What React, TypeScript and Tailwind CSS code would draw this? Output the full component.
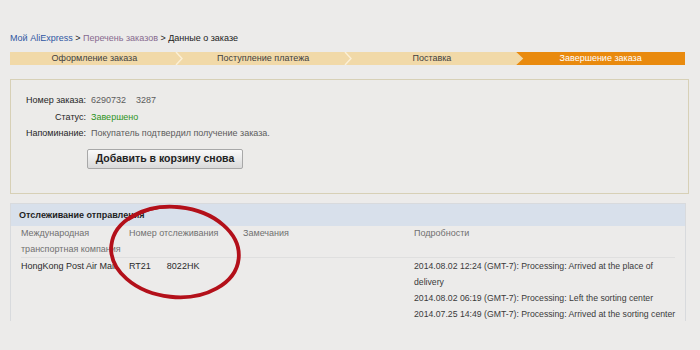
import React from "react";

function Chevron({ color = "#fbefd6" }: { color?: string }) {
  return (
    <svg
      className="absolute right-[-4px] top-0 z-10"
      width="8"
      height="13"
      viewBox="0 0 8 13"
    >
      <path d="M1 0 L7 6.5 L1 13" fill="none" stroke={color} strokeWidth="1.4" />
    </svg>
  );
}

export default function App() {
  return (
    <div
      className="relative w-[700px] h-[350px] overflow-hidden bg-[#ecebea] text-[9px] text-[#333]"
      style={{ fontFamily: '"Liberation Sans", Arial, sans-serif' }}
    >
      <div className="pt-[32px] px-[10px]">
        {/* breadcrumb */}
        <div className="h-[12px] leading-[12px] whitespace-nowrap">
          <span className="text-[#2f57a3]">Мой AliExpress</span>
          <span className="text-[#222]"> &gt; </span>
          <span className="text-[#876a8f]">Перечень заказов</span>
          <span className="text-[#222]"> &gt; </span>
          <span className="text-[#1a1a1a]">Данные о заказе</span>
        </div>

        {/* progress bar */}
        <div className="mt-[8px] w-[675px] h-[13px] flex bg-[#f1d9a8] text-[#3f3f3f] leading-[13px]">
          <div className="relative flex-1 text-center">
            Оформление заказа
            <Chevron />
          </div>
          <div className="relative flex-1 text-center">
            Поступление платежа
            <Chevron />
          </div>
          <div className="relative flex-1 text-center">Поставка</div>
          <div className="relative flex-1 text-center text-white bg-[#e98a0e] [clip-path:polygon(0_0,100%_0,100%_100%,0_100%,7px_50%)]">
            Завершение заказа
          </div>
        </div>

        {/* order info box */}
        <div className="mt-[14px] w-[679px] h-[115px] border border-[#d7d0b6] bg-[#ecebe9] pl-[12px] pt-[12px]">
          <div className="flex leading-[16.5px]">
            <div className="w-[63px] text-right text-[#262626]">Номер заказа:</div>
            <div className="ml-[5px] text-[#5c5c5c]">
              6290732<span className="ml-[10px]">3287</span>
            </div>
          </div>
          <div className="flex leading-[16.5px]">
            <div className="w-[63px] text-right text-[#262626]">Статус:</div>
            <div className="ml-[5px] text-[#2f9424]">Завершено</div>
          </div>
          <div className="flex leading-[16.5px]">
            <div className="w-[63px] text-right text-[#262626]">Напоминание:</div>
            <div className="ml-[5px] text-[#5c5c5c]">Покупатель подтвердил получение заказа.</div>
          </div>
          <div className="mt-[7px] ml-[64px] w-[156px] h-[20px] border border-[#a8a8a8] rounded-[2px] bg-gradient-to-b from-[#fafafa] to-[#dadada] flex items-center justify-center text-[10.5px] font-bold text-[#222]">
            Добавить в корзину снова
          </div>
        </div>

        {/* tracking box */}
        <div className="mt-[9px] w-[676px] h-[118px] border-l border-r border-t border-[#d8dadd] overflow-hidden">
          <div className="h-[22px] leading-[22px] bg-[#d8e0eb] pl-[8px] font-bold text-[#1e1e1e]">
            Отслеживание отправления
          </div>
          <div className="px-[10px]">
            <div className="flex border-b border-[#dfdfdf] text-[#707070] leading-[15.5px]">
              <div className="w-[108px] shrink-0">
                Международная
                <br />
                транспортная компания
              </div>
              <div className="w-[114px] shrink-0">Номер отслеживания</div>
              <div className="w-[171px] shrink-0">Замечания</div>
              <div className="flex-1">Подробности</div>
            </div>
            <div className="flex leading-[16px] text-[#2a2a2a]">
              <div className="w-[108px] shrink-0 whitespace-nowrap overflow-hidden">HongKong Post Air Mail</div>
              <div className="w-[114px] shrink-0 whitespace-nowrap">
                RT21<span className="ml-[16px]">8022HK</span>
              </div>
              <div className="w-[171px] shrink-0"></div>
              <div className="flex-1 whitespace-nowrap text-[#3a3a3a] text-[8.7px]">
                <div>2014.08.02 12:24 (GMT-7): Processing: Arrived at the place of</div>
                <div>delivery</div>
                <div>2014.08.02 06:19 (GMT-7): Processing: Left the sorting center</div>
                <div>2014.07.25 14:49 (GMT-7): Processing: Arrived at the sorting center</div>
              </div>
            </div>
          </div>
        </div>
      </div>

      {/* hand-drawn red ellipse */}
      <svg className="absolute left-0 top-0 pointer-events-none" width="700" height="350">
        <ellipse
          cx="175"
          cy="252"
          rx="64"
          ry="45"
          transform="rotate(6 175 252)"
          fill="none"
          stroke="#b3101a"
          strokeWidth="3.8"
        />
        <path
          d="M128 220 Q150 205 178 207"
          fill="none"
          stroke="#b3101a"
          strokeWidth="2.5"
        />
      </svg>
    </div>
  );
}
